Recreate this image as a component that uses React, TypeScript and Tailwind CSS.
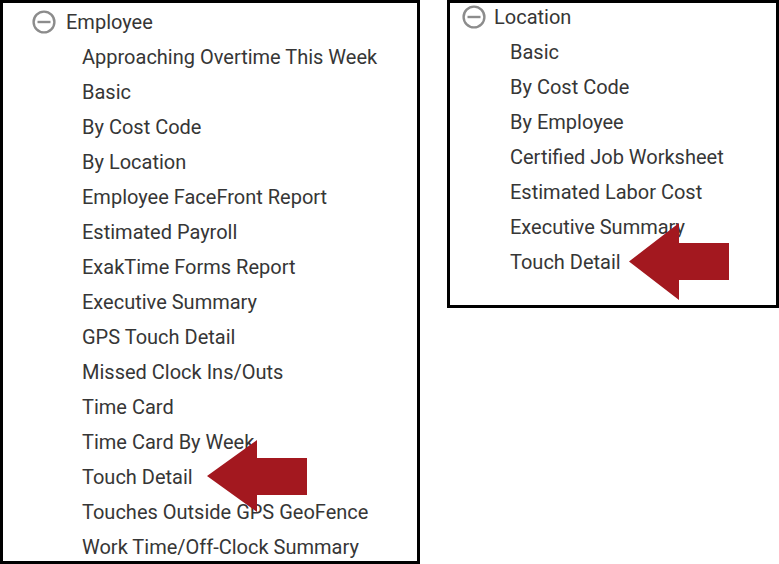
import React from 'react';

const employeeReports = [
  'Approaching Overtime This Week',
  'Basic',
  'By Cost Code',
  'By Location',
  'Employee FaceFront Report',
  'Estimated Payroll',
  'ExakTime Forms Report',
  'Executive Summary',
  'GPS Touch Detail',
  'Missed Clock Ins/Outs',
  'Time Card',
  'Time Card By Week',
  'Touch Detail',
  'Touches Outside GPS GeoFence',
  'Work Time/Off-Clock Summary',
];

const locationReports = [
  'Basic',
  'By Cost Code',
  'By Employee',
  'Certified Job Worksheet',
  'Estimated Labor Cost',
  'Executive Summary',
  'Touch Detail',
];

const MinusCircle = () => (
  <svg width="24" height="24" viewBox="0 0 24 24" className="shrink-0">
    <circle cx="12" cy="12" r="10.4" fill="none" stroke="#8c8c8c" strokeWidth="2.4" />
    <line x1="5.5" y1="12" x2="18.5" y2="12" stroke="#8c8c8c" strokeWidth="2.4" />
  </svg>
);

// big red arrow pointing left, 100 wide
const Arrow = ({ h, shaftTop, shaftBottom }: { h: number; shaftTop: number; shaftBottom: number }) => (
  <svg width="100" height={h} viewBox={`0 0 100 ${h}`}>
    <polygon
      points={`0,${h / 2} 50,0 50,${shaftTop} 100,${shaftTop} 100,${shaftBottom} 50,${shaftBottom} 50,${h}`}
      fill="#a3181f"
    />
  </svg>
);

export default function App() {
  return (
    <div
      className="flex items-start gap-[27px] w-[779px] h-[564px] bg-white text-[#363636] overflow-hidden"
      style={{ fontFamily: 'Roboto, "Liberation Sans", sans-serif' }}
    >
      {/* employee panel */}
      <div className="relative w-[420px] h-[564px] border-[3px] border-black shrink-0">
        <div className="flex items-center h-[37px] pt-[1px] pl-[29px] gap-[10px]">
          <MinusCircle />
          <span className="text-[20px]">Employee</span>
        </div>
        <ul className="pl-[79px]">
          {employeeReports.map((r) => (
            <li key={r} className="h-[35px] leading-[35px] text-[20px] whitespace-nowrap">
              {r}
            </li>
          ))}
        </ul>
        <div className="absolute left-[204px] top-[437px]">
          <Arrow h={72} shaftTop={18} shaftBottom={55} />
        </div>
      </div>

      {/* location panel */}
      <div className="relative w-[332px] h-[308px] border-[3px] border-black shrink-0">
        <div className="flex items-center h-[28px] mb-[4px] pl-[12px] gap-[8px]">
          <MinusCircle />
          <span className="text-[20px]">Location</span>
        </div>
        <ul className="pl-[60px]">
          {locationReports.map((r) => (
            <li key={r} className="h-[35px] leading-[35px] text-[20px] whitespace-nowrap">
              {r}
            </li>
          ))}
        </ul>
        <div className="absolute left-[179px] top-[220px]">
          <Arrow h={77} shaftTop={20} shaftBottom={57} />
        </div>
      </div>
    </div>
  );
}
